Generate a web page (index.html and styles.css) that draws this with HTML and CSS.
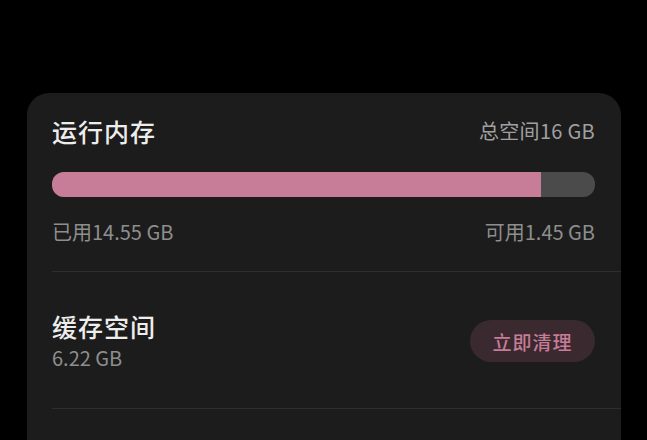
FILE: index.html
```html
<!DOCTYPE html>
<html lang="zh">
<head>
<meta charset="utf-8">
<link rel="stylesheet" href="styles.css">
</head>
<body>
<div class="page">
  <div class="card">
    <div class="section mem">
      <div class="row head">
        <div class="title">运行内存</div>
        <div class="meta">总空间16 GB</div>
      </div>
      <div class="bar"><div class="fill" style="width:90%"></div></div>
      <div class="row foot">
        <div class="meta">已用14.55 GB</div>
        <div class="meta">可用1.45 GB</div>
      </div>
    </div>
    <div class="divider"></div>
    <div class="section cache">
      <div class="info">
        <div class="title2">缓存空间</div>
        <div class="meta sub">6.22 GB</div>
      </div>
      <div class="btn">立即清理</div>
    </div>
    <div class="divider"></div>
  </div>
</div>
</body>
</html>
```
FILE: styles.css
```css
html, body {
  margin: 0;
  padding: 0;
  background: #000;
  height: 100%;
  overflow: hidden;
}
body {
  font-family: "Noto Sans CJK SC", "Noto Sans", sans-serif;
}
.page {
  padding-top: 93px;
  padding-left: 27px;
}
.card {
  width: 594px;
  height: 347px;
  background: #1c1c1c;
  border-radius: 22px 22px 0 0;
  padding-left: 25px;
  box-sizing: border-box;
}
.section {
  padding-right: 26px;
}
.mem {
  padding-top: 20px;
}
.row {
  display: flex;
  justify-content: space-between;
  align-items: center;
}
.title {
  color: #ededed;
  font-size: 25px;
  font-weight: 500;
  line-height: 36px;
  letter-spacing: 1px;
}
.meta {
  color: #8e8e8e;
  font-size: 20px;
  line-height: 24px;
}
.head .meta {
  color: #a0a0a0;
  letter-spacing: 0.3px;
}
.bar {
  margin-top: 23px;
  height: 25px;
  border-radius: 12px;
  background: #4b4b4b;
  overflow: hidden;
}
.fill {
  height: 100%;
  background: #c77c97;
}
.foot {
  margin-top: 23px;
}
.divider {
  height: 1px;
  background: #2e2e2e;
  margin-top: 27px;
}
.cache {
  display: flex;
  justify-content: space-between;
  align-items: center;
  padding-top: 37px;
  padding-bottom: 35px;
}
.cache + .divider {
  margin-top: 0;
}
.title2 {
  color: #ededed;
  font-size: 25px;
  font-weight: 500;
  line-height: 34px;
  letter-spacing: 1px;
}
.sub {
  line-height: 30px;
}
.btn {
  width: 125px;
  height: 42px;
  border-radius: 21px;
  background: #3a2a30;
  color: #c77c97;
  font-size: 19px;
  font-weight: 500;
  display: flex;
  align-items: center;
  justify-content: center;
  letter-spacing: 1px;
}
```
